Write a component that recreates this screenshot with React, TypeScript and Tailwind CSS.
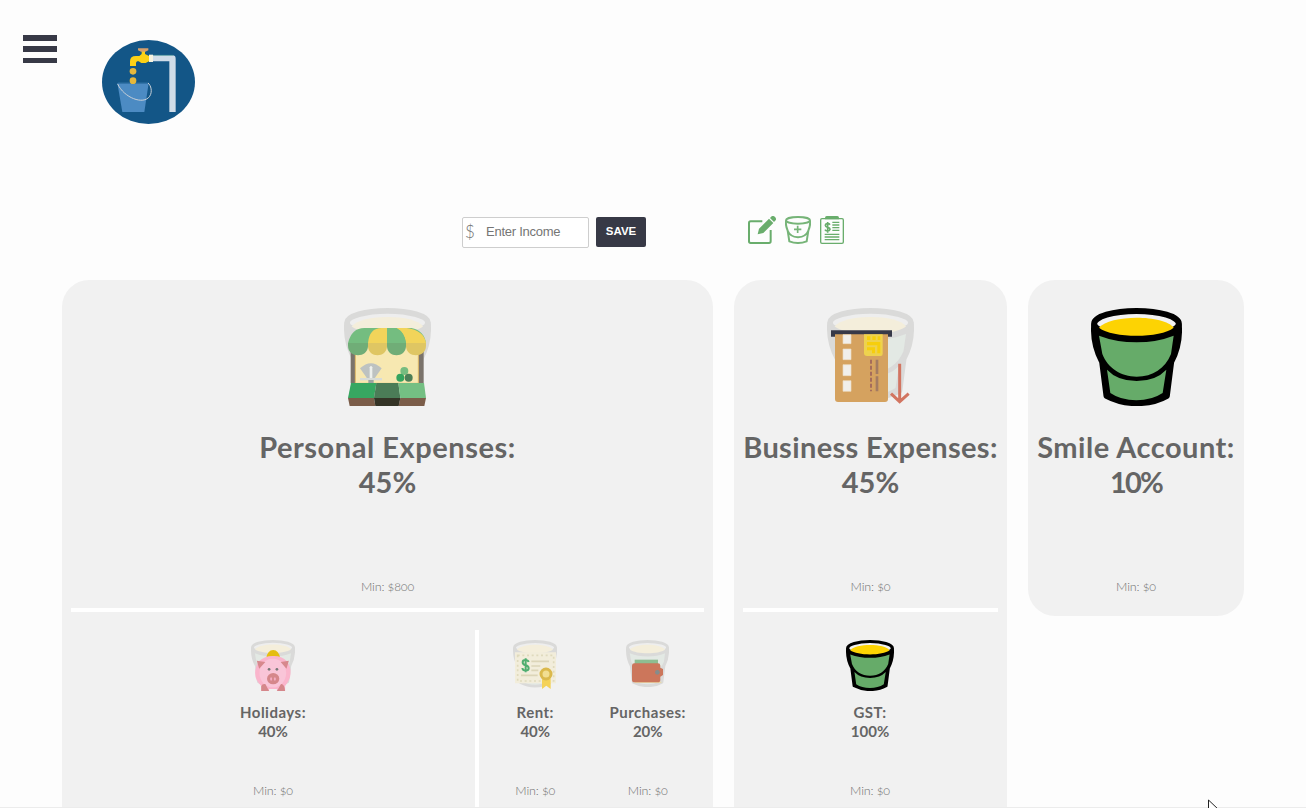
import React from "react";

type BucketProps = { line?: string; fill?: string; liquid?: string; rim?: string };

/* Bucket body, drawn in a 273 x 294 space. */
function BucketShape({
  line = "#000",
  fill = "#66ab69",
  liquid = "#fdd303",
  rim = "#f1f1f1",
}: BucketProps) {
  return (
    <g strokeLinejoin="round">
      <path
        d="M9 52 C6 94 14 126 33 162 L46 264 Q88 286 136 286 Q190 286 228 264 L241 162 C260 126 267 94 264 52 Z"
        fill={line}
        stroke={line}
        strokeWidth="17"
      />
      <path d="M24 83 Q76 103 137 103 Q197 103 248 83 L240 138 C222 182 186 206 137 206 C90 206 50 180 34 138 Z" fill={fill} />
      <path d="M48 185 Q80 219 137 219 Q194 219 226 185 L215 255 Q182 277 136 277 Q90 277 58 255 Z" fill={fill} />
      <ellipse cx="136.500" cy="47" rx="127" ry="38" fill={rim} stroke={line} strokeWidth="18" />
      <path d="M24 59 C55 19 220 19 248 59 C208 91 65 91 24 59 Z" fill={liquid} />
    </g>
  );
}

function FadedBucket() {
  return <BucketShape line="#dadad9" fill="#e3e9e4" liquid="#f4eedb" rim="#eeeeee" />;
}

function Bucket({ className }: { className: string }) {
  return (
    <svg className={className} viewBox="0 0 273 294" preserveAspectRatio="none">
      <BucketShape />
    </svg>
  );
}

function ShopIcon() {
  return (
    <svg className="h-[98px] w-[87px]" viewBox="27 24 261 294">
      <g transform="translate(27 24) scale(.956 .94)"><FadedBucket /></g>
      <path d="M47 150H266V250H47Z" fill="#7a736b" />
      <path d="M61 140H250V250H61Z" fill="#f7e8b1" stroke="#dfba67" strokeWidth="3" />
      <path d="M39 129 Q50 84 88 84H229 Q267 91 273 129Z" fill="#74bd80" />
      <path d="M99 129 Q103 84 140 84H156V129Z M156 84H215Q267 91 273 129H213Q209 97 184 84Z" fill="#f2d45a" />
      <path d="M156 84H184Q209 97 213 129H156Z" fill="#74bd80" />
      <path d="M39 129H99V137C99 175 39 175 39 137Z M156 129H213V137C213 175 156 175 156 137Z" fill="#70ad77" />
      <path d="M99 129H156V137C156 175 99 175 99 137Z M213 129H273V137C273 175 213 175 213 137Z" fill="#dfc663" />
      <path d="M75 205Q108 174 140 205L119 235H96Z" fill="#bdc2c1" />
      <path d="M104 202Q108 194 112 202V235H104Z" fill="#edf0ed" />
      <path d="M75 234H141V241H75Z" fill="#d8dcd8" /><path d="M100 240H116V250H100Z" fill="#9ca4a2" />
      <circle cx="208" cy="213" r="12" fill="#76bc80" />
      <circle cx="196" cy="233" r="12" fill="#35a45e" /><circle cx="221" cy="233" r="12" fill="#4c7e57" />
      <path d="M48 249H124L117 294H39Z" fill="#37a761" />
      <path d="M124 249H190L196 294H117Z" fill="#4b7c57" />
      <path d="M190 249H267L273 294H196Z" fill="#74bf83" />
      <path d="M39 294H117L121 318H44Z M196 294H273L268 318H191Z" fill="#7b5d49" />
      <path d="M117 294H196L191 318H121Z" fill="#343426" />
    </svg>
  );
}

function CardIcon() {
  return (
    <svg className="h-[98px] w-[87px]" viewBox="27 24 261 294">
      <g transform="translate(27 24) scale(.956 .94)"><FadedBucket /></g>
      <path d="M39 91H222V110H39Z" fill="#373948" />
      <path d="M51 103H210V297Q210 306 201 306H60Q51 306 51 297Z" fill="#d5a25f" />
      <path d="M75 104H99V131H75Z M75 147H99V179H75Z M75 194H99V227H75Z M75 242H99V274H75Z" fill="#f1efeb" stroke="#eddcc2" strokeWidth="2" />
      <path d="M138 103H194V162Q194 168 188 168H147Q138 168 138 159Z" fill="#eed24e" />
      <path d="M147 109H157V120H147Z M163 109H173V120H163Z M179 109H187V120H179Z M147 126H187V160H178V136H147Z M147 142H171V160H162V151H147Z" fill="#f6ce0d" />
      <path d="M159 179V274" stroke="#a56c5b" strokeWidth="6" strokeDasharray="12 6" />
      <path d="M177 179V222M177 229V274" stroke="#a37b62" strokeWidth="8" />
      <path d="M245 191V304M219 281L245 305L272 281" fill="none" stroke="#d27561" strokeWidth="9" />
    </svg>
  );
}

function PigIcon() {
  return (
    <svg className="h-[51px] w-[44px]" viewBox="33 30 129 153" preserveAspectRatio="none">
      <g transform="translate(33 30) scale(.473 .476)"><FadedBucket /></g>
      <path d="M78 84Q81 61 98 60Q115 61 118 84Z" fill="#e5bd10" />
      <path d="M58 92Q75 77 98 78Q122 77 137 92Q150 107 149 130Q148 150 133 168V183H109V177H86V183H63V168Q45 150 45 130Q45 107 58 92Z" fill="#fab5cc" />
      <ellipse cx="97" cy="129" rx="39" ry="43" fill="#f9c5d8" />
      <path d="M50 92L75 96L57 116Z M144 92L120 96L137 116Z" fill="#d7888d" />
      <circle cx="86" cy="118" r="4" fill="#777" /><circle cx="109" cy="118" r="4" fill="#777" />
      <ellipse cx="98" cy="146" rx="18" ry="17" fill="#d5878b" />
      <ellipse cx="92" cy="147" rx="3" ry="5" fill="#f5abc3" /><ellipse cx="103" cy="147" rx="3" ry="5" fill="#f5abc3" />
      <path d="M63 183V169Q66 160 75 162L86 183Z M109 183L121 162Q131 161 133 183Z" fill="#d5878b" />
    </svg>
  );
}

function RentIcon() {
  return (
    <svg className="h-[51px] w-[44px]" viewBox="39 29 132 153" preserveAspectRatio="none">
      <g transform="translate(39 29) scale(.484 .484)"><FadedBucket /></g>
      <path d="M45 66H168V159H45Z" fill="#f2eddb" />
      <path d="M53 75H161V152H53Z" fill="none" stroke="#dfdabd" strokeWidth="5" strokeDasharray="6 8" />
      <path d="M94 93H147M94 107H121M94 120H115M63 135H113" stroke="#dcd5b8" strokeWidth="5" />
      <path d="M86 95Q84 89 76 89Q68 89 68 96Q68 103 77 105Q86 107 86 114Q86 121 77 121Q68 121 67 113M77 84V126" fill="none" stroke="#4fae70" strokeWidth="6" />
      <path d="M126 145H152V176L139 166L126 176Z" fill="#f4d258" />
      <circle cx="138" cy="131" r="15" fill="#f2de91" stroke="#dbb94c" strokeWidth="9" />
    </svg>
  );
}

function WalletIcon() {
  return (
    <svg className="h-[47px] w-[43px]" viewBox="378 29 129 141" preserveAspectRatio="none">
      <g transform="translate(378 29) scale(.473 .48)"><FadedBucket /></g>
      <path d="M404 88H474V104H404Z" fill="#8ebd91" />
      <path d="M404 154H484V158H404Z" fill="#ead9a9" />
      <path d="M396 106Q396 99 403 99H474Q481 99 481 106V112L489 116V134L481 139V148Q481 156 473 156H404Q396 156 396 148Z" fill="#cc765b" />
      <circle cx="472" cy="126" r="7" fill="#858c8b" />
    </svg>
  );
}

function Logo() {
  return (
    <svg className="ml-[45px] mt-[5px] h-[84px] w-[93px]" viewBox="276 45 279 252">
      <ellipse cx="415.500" cy="171" rx="139.500" ry="126" fill="#135687" />
      <path d="M428 91H487Q497 91 497 101V261H478V109H428Z" fill="#cfdce8" />
      <path d="M430 91H489" stroke="#4f9d9b" strokeWidth="2" />
      <path d="M360 123V109Q360 93 378 93H388L395 87V78H405V87L417 93V109L407 114H394L386 109H382Q378 110 378 115V123Z" fill="#fcd116" />
      <path d="M384 70H415V76L406 80H393L384 76Z" fill="#d7a06b" />
      <path d="M417 89H429V111H417Z" fill="#f5f2df" />
      <circle cx="369" cy="139" r="10" fill="#e5b83c" />
      <path d="M322 174H416L403 261H337Z" fill="#4c8bc3" />
      <path d="M324 174H416" stroke="#286a9d" strokeWidth="4" />
      <circle cx="369" cy="167" r="10" fill="#e5b83c" />
      <path d="M323 177C342 218 400 241 419 214C428 200 423 181 414 174" fill="none" stroke="#c8d0d8" strokeWidth="3" />
    </svg>
  );
}

function EditIcon() {
  return (
    <svg className="h-7 w-7" viewBox="24 33 84 84" fill="none">
      <path d="M67 49H32Q27 49 27 54V109Q27 114 32 114H87Q92 114 92 109V75" stroke="#69ad6c" strokeWidth="6" />
      <path d="M53 88L57 71L87 41L100 54L70 84Z M90 39L95 34Q100 31 105 36Q110 41 107 46L102 51Z" fill="#69ad6c" />
    </svg>
  );
}

function AddBucketIcon() {
  return (
    <svg className="h-7 w-[26px]" viewBox="135 33 78 84" fill="none" stroke="#76b478" strokeWidth="6">
      <ellipse cx="174" cy="46" rx="36" ry="10" />
      <path d="M138 47Q136 61 143 77L148 109Q174 119 200 109L205 77Q212 61 210 47M142 75Q150 96 174 97Q198 96 206 75" />
      <path d="M162 73H184M173 62V84" strokeWidth="5" />
    </svg>
  );
}

function ReportIcon() {
  return (
    <svg className="h-7 w-6" viewBox="240 33 72 84" fill="none" stroke="#69ad6c">
      <rect x="242" y="41" width="68" height="74" rx="4" strokeWidth="4" />
      <path d="M255 43V38Q255 33 260 33H292Q297 33 297 38V43Z" fill="#69ad6c" stroke="none" />
      <path d="M277 52H298M277 60H298M277 68H298M277 76H298M254 88H298M254 96H298M254 104H298" strokeWidth="4" />
      <path d="M270 59Q267 55 262 56Q256 57 256 61Q256 65 263 67Q270 69 270 73Q269 78 262 78Q257 78 255 74M263 51V83" strokeWidth="5" />
    </svg>
  );
}

type AccountProps = {
  title: string;
  percent: string;
  min: string;
  icon: React.ReactNode;
  spacing: string;
  percentSpacing?: string;
};

function Minimum({ amount }: { amount: string }) {
  return (
    <p className="text-[12.5px] leading-[18px] font-light tracking-[-0.15px] text-[#707070] oldstyle-nums">
      Min: {amount}
    </p>
  );
}

function MainAccount({ title, percent, min, icon, spacing, percentSpacing = "tracking-normal" }: AccountProps) {
  return (
    <div className="flex h-[328px] flex-col items-center pt-7">
      {icon}
      <h2 className="mt-[23px] mb-[79px] text-center text-[29px] leading-[35px] font-bold whitespace-nowrap">
        <span className={spacing}>{title}</span><br /><span className={percentSpacing}>{percent}</span>
      </h2>
      <Minimum amount={min} />
    </div>
  );
}

function SubAccount({ title, percent, min, icon, spacing }: AccountProps) {
  return (
    <div className="flex flex-1 flex-col items-center pt-2.5">
      <div className="h-[51px] shrink-0">{icon}</div>
      <h3 className="mt-3 mb-[41px] text-center text-[15px] leading-[19px] font-bold whitespace-nowrap">
        <span className={spacing}>{title}</span><br /><span>{percent}</span>
      </h3>
      <Minimum amount={min} />
    </div>
  );
}

export default function App() {
  return (
    <div className="relative flex h-[808px] w-[1306px] flex-col overflow-hidden bg-[#fdfdfd] font-['Lato',sans-serif] text-[#656565]">
      <header className="flex h-[217px] items-start pl-[23px] pt-[35px]">
        <button aria-label="Menu" className="flex h-7 w-[34px] flex-col">
          <span className="h-1.5 w-full bg-[#373946]" />
          <span className="mt-[5px] h-1.5 w-full bg-[#373946]" />
          <span className="mt-1.5 h-[5px] w-full bg-[#373946]" />
        </button>
        <Logo />
      </header>

      <div className="flex h-[63px] items-start pl-[462px]">
        <label className="flex h-[31px] w-[127px] items-center rounded-xs border border-[#cecece] bg-white pl-0.5">
          <span className="w-[21px] pb-0.5 text-[17px] leading-5 font-light text-[#747474]">$</span>
          <input aria-label="Income" placeholder="Enter Income" className="w-[98px] pb-0.5 font-['Liberation_Sans',sans-serif] text-[13px] leading-4 tracking-[-0.25px] outline-none placeholder:text-[#757575]" />
        </label>
        <button className="ml-[7px] h-[30px] w-[50px] rounded-xs bg-[#373946] font-['Liberation_Sans',sans-serif] text-[11.5px] font-bold text-white">SAVE</button>
        <div className="-mt-px ml-[102px] flex gap-[9px]">
          <EditIcon /><AddBucketIcon /><ReportIcon />
        </div>
      </div>

      <main className="flex h-[528px] items-start gap-[21px] pl-[62px]">
        <section className="h-full w-[651px] rounded-t-[27px] bg-[#f1f1f1] px-[9px]">
          <MainAccount title="Personal Expenses:" percent="45%" min="$800" icon={<ShopIcon />} spacing="tracking-[0.55px]" />
          <div className="h-1 bg-white" />
          <div className="flex h-[196px] pt-[18px]">
            <div className="flex w-[404px]">
              <SubAccount title="Holidays:" percent="40%" min="$0" icon={<PigIcon />} spacing="tracking-[0.5px]" />
            </div>
            <div className="h-full w-1 bg-white" />
            <SubAccount title="Rent:" percent="40%" min="$0" icon={<RentIcon />} spacing="tracking-[0.5px]" />
            <SubAccount title="Purchases:" percent="20%" min="$0" icon={<WalletIcon />} spacing="tracking-[0.5px]" />
          </div>
        </section>
        <section className="h-full w-[273px] rounded-t-[27px] bg-[#f1f1f1] px-[9px]">
          <MainAccount title="Business Expenses:" percent="45%" min="$0" icon={<CardIcon />} spacing="tracking-[0.35px]" />
          <div className="h-1 bg-white" />
          <div className="flex pt-[18px] pr-px">
            <SubAccount title="GST:" percent="100%" min="$0" icon={<Bucket className="h-[51px] w-12" />} spacing="tracking-[0.5px]" />
          </div>
        </section>
        <section className="h-[336px] w-[216px] rounded-[27px] bg-[#f1f1f1] px-[9px]">
          <MainAccount title="Smile Account:" percent="10%" min="$0" icon={<Bucket className="h-[98px] w-[91px]" />} spacing="tracking-[0.5px]" percentSpacing="tracking-[-1.8px]" />
        </section>
      </main>
      <div className="absolute bottom-0 left-0 h-px w-full bg-[#ececec]" />
      <svg className="absolute bottom-0 left-[1207px] h-[9px] w-3" viewBox="0 0 12 9">
        <path d="M1.500 12V1L12 11" fill="#fff" stroke="#222" />
      </svg>
    </div>
  );
}
